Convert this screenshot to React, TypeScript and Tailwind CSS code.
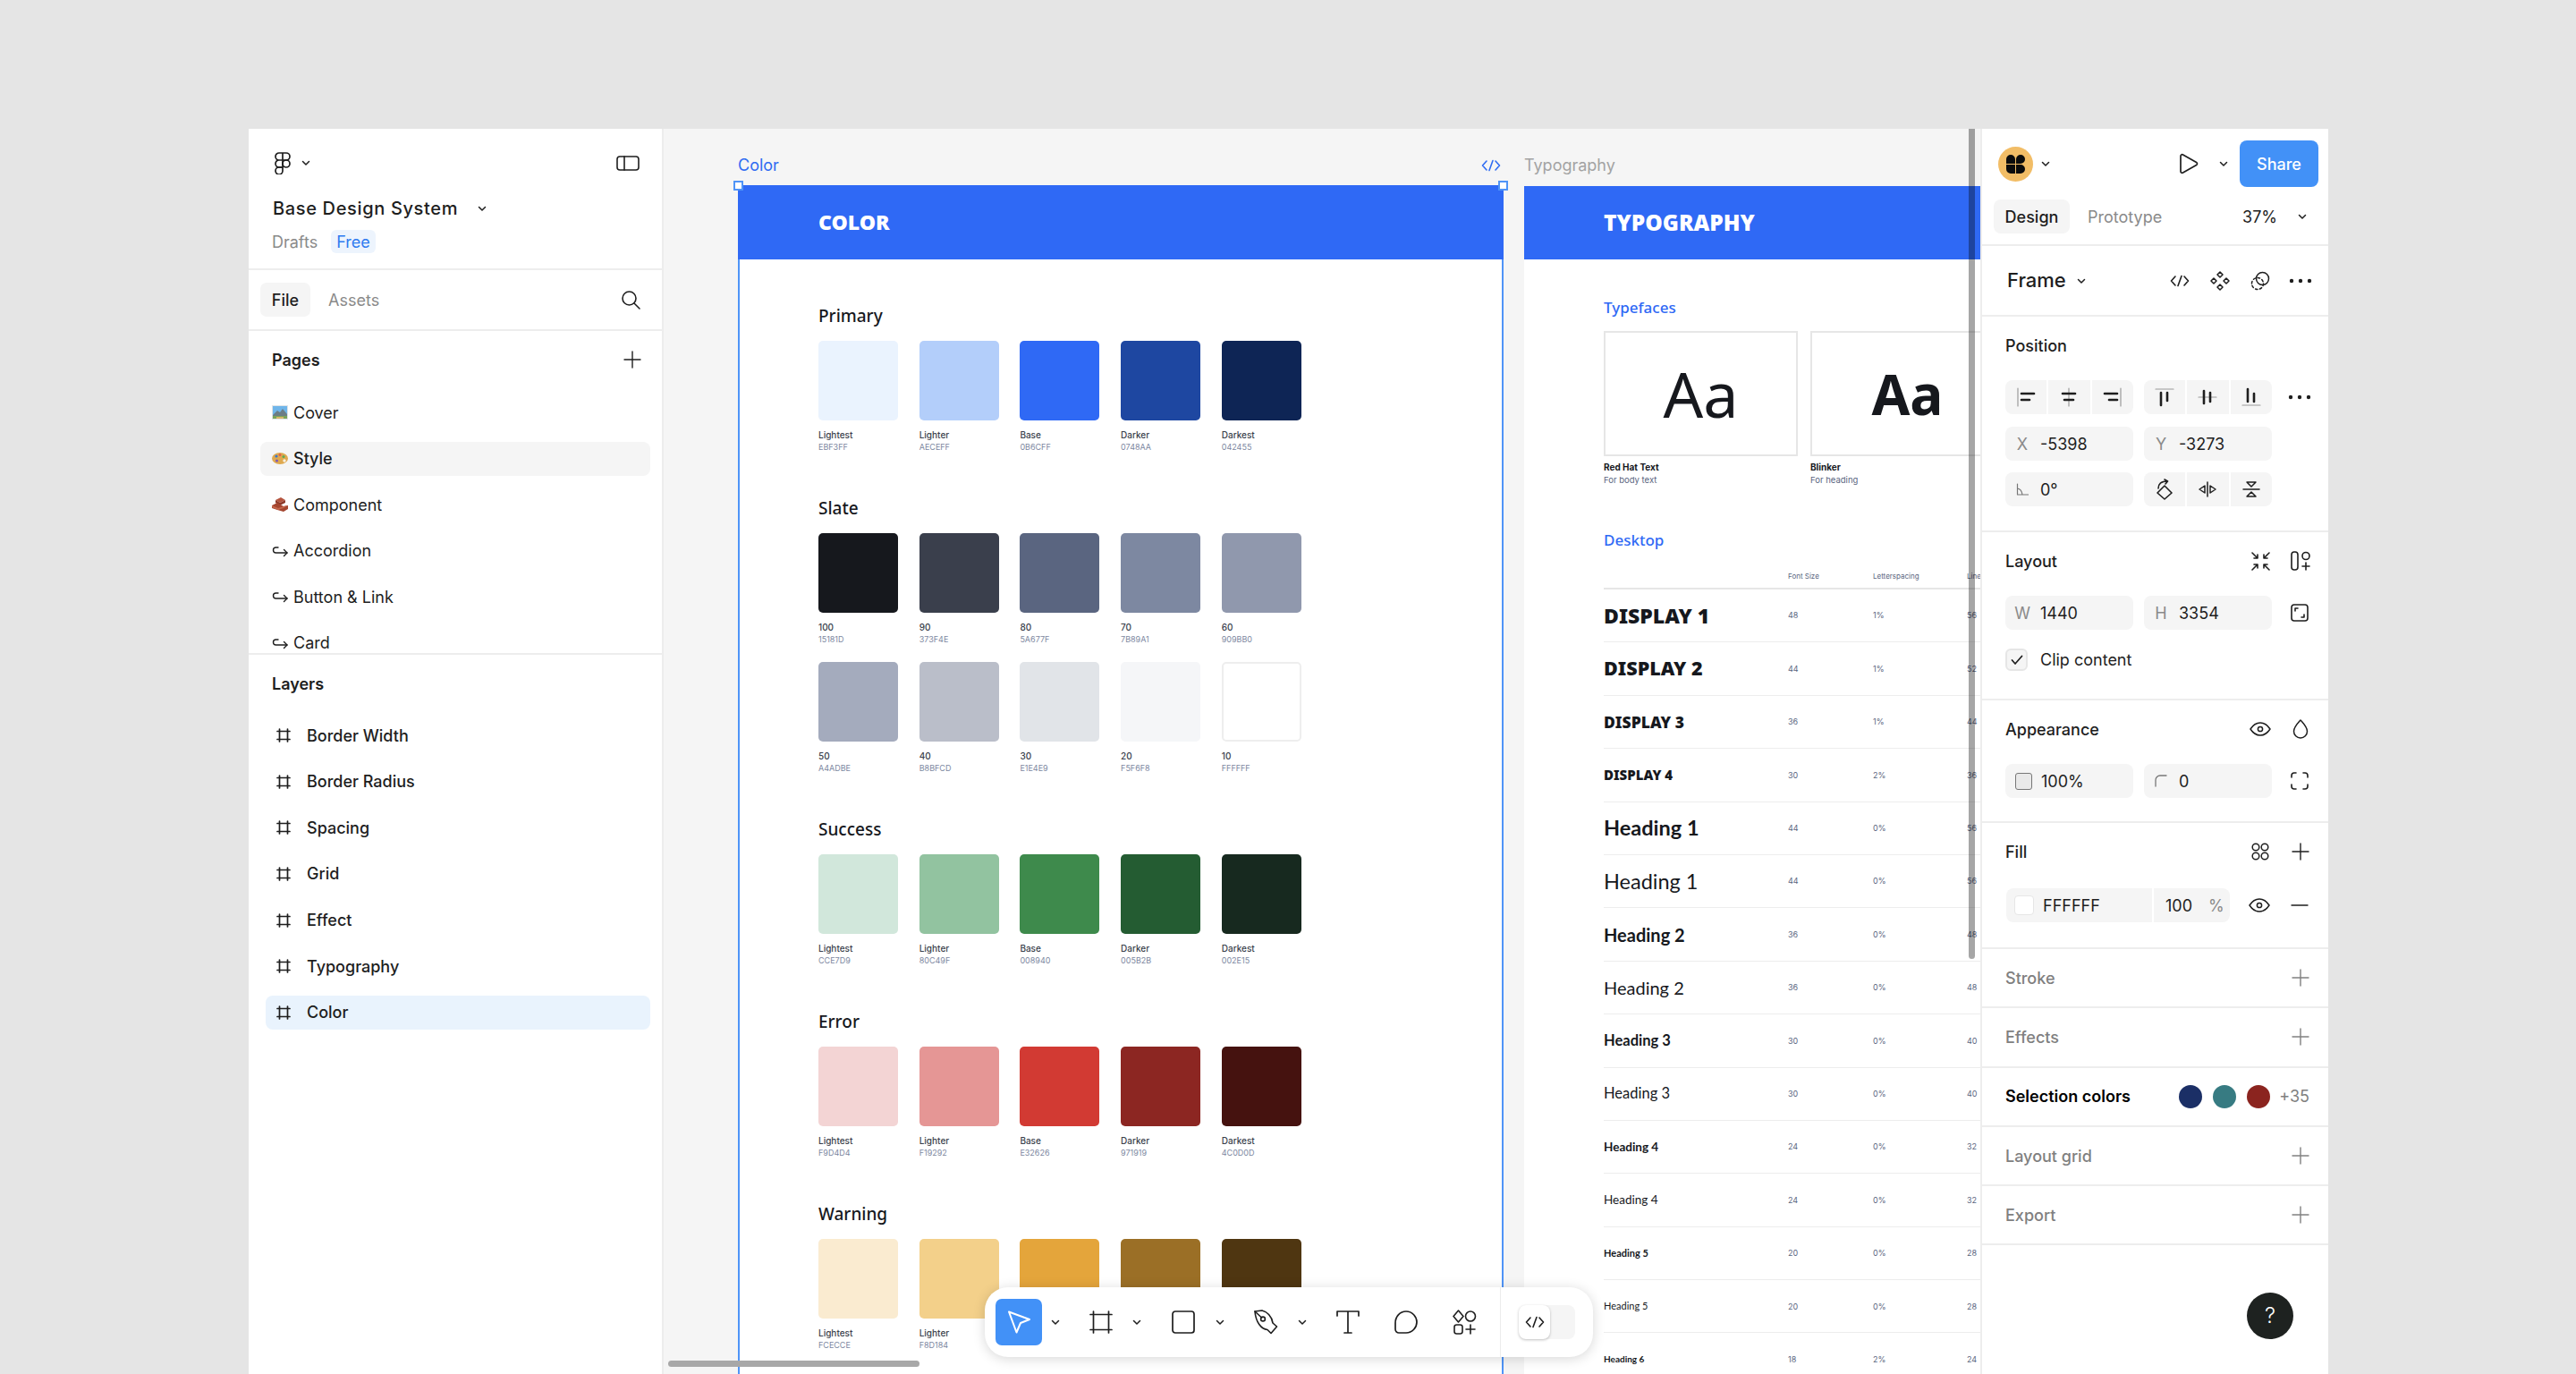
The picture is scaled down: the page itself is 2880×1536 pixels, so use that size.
import React from "react";

type P = { className?: string };
const S = ({ w = 24, h = 24, vb, className = "", children, sw = 1.6 }: { w?: number; h?: number; vb?: string; className?: string; children: React.ReactNode; sw?: number }) => (
  <svg width={w} height={h} viewBox={vb || `0 0 ${w} ${h}`} fill="none" stroke="currentColor" strokeWidth={sw} strokeLinecap="round" strokeLinejoin="round" className={`shrink-0 ${className}`}>
    {children}
  </svg>
);

const Chev = ({ className = "" }: P) => (
  <S w={12} h={12} sw={1.5} className={className}><path d="M2.5 4.5 6 8l3.5-3.5" /></S>
);
const Plus = ({ className = "" }: P) => (
  <S w={20} h={20} sw={1.4} className={className}><path d="M10 1v18M1 10h18" /></S>
);
const Dots = () => (
  <svg width="26" height="6" viewBox="0 0 26 6" className="shrink-0"><circle cx="3" cy="3" r="2.2" fill="#1e1e1e" /><circle cx="13" cy="3" r="2.2" fill="#1e1e1e" /><circle cx="23" cy="3" r="2.2" fill="#1e1e1e" /></svg>
);
const Eye = () => (
  <S w={24} h={16} sw={1.5}><path d="M1 8c3-4.6 6.8-7 11-7s8 2.4 11 7c-3 4.6-6.8 7-11 7S4 12.6 1 8z" /><circle cx="12" cy="8" r="2.6" /></S>
);
const CodeIc = ({ className = "" }: P) => (
  <S w={22} h={14} sw={1.6} className={className}><path d="M6 2 1.5 7 6 12M16 2l4.5 5L16 12M13 1.5 9 12.5" /></S>
);
const Hash = () => (
  <S w={16} h={16} sw={1.7}><path d="M3.500 1v14M12.500 1v14M1 3.500h14M1 12.500h14" /></S>
);
const Hook = () => (
  <S w={18} h={14} sw={1.4}><path d="M17 9H4.500a3 3 0 0 1 0-6H7" /><path d="M13.500 5.500 17 9l-3.500 3.500" /></S>
);

const Cover = () => (
  <svg width="18" height="16" viewBox="0 0 18 16" className="shrink-0">
    <rect width="18" height="16" fill="#dfe3e6" />
    <rect x="1" y="1" width="16" height="14" fill="#6fb5ea" />
    <path d="M1 11 6 6l3 2 3-4 5 6v5H1z" fill="#6b7d86" />
    <path d="M1 12h16v3H1z" fill="#7aa35a" />
    <path d="M5 13h8v2H5z" fill="#d8b56a" />
  </svg>
);
const Palette = () => (
  <svg width="18" height="15" viewBox="0 0 18 15" className="shrink-0">
    <ellipse cx="9" cy="7.500" rx="9" ry="6.500" fill="#dfa94f" />
    <circle cx="5" cy="5" r="1.600" fill="#3b78c9" />
    <circle cx="9" cy="3.600" r="1.400" fill="#e2574c" />
    <circle cx="13" cy="5.400" r="1.500" fill="#5aa85a" />
    <circle cx="5.500" cy="10" r="1.500" fill="#7c5bb8" />
    <circle cx="14" cy="10" r="1.700" fill="#f6f1e4" />
  </svg>
);
const Bricks = () => (
  <svg width="18" height="16" viewBox="0 0 18 16" className="shrink-0">
    <path d="M4 3 10 0l5 3-6 3z" fill="#b5553f" />
    <path d="M4 3v3l5 3V6zM9 6v3l6-3V3z" fill="#8d3a2a" />
    <path d="M0 9l6-3 7 4 5-1v4l-5 3-7-2-6-2z" fill="#a4452f" />
    <path d="M0 9l7 3 6-2 5-1-5 3-6 2-7-3z" fill="#c4664b" />
  </svg>
);

const Logo = () => (
  <S w={20} h={25} vb="0 0 20 25" sw={1.7}>
    <path d="M10 1H6a4 4 0 0 0 0 8h4V1zM10 1h4a4 4 0 0 1 0 8h-4V1zM10 9H6a4 4 0 0 0 0 8h4V9z" />
    <circle cx="14" cy="13" r="4" />
    <path d="M6 17h4v4a4 4 0 1 1-4-4z" />
  </S>
);

const Divider = () => <div className="h-[2px] bg-[#ededed] shrink-0" />;

const pages = [
  { n: "Cover", ic: <Cover />, x: "" },
  { n: "Style", ic: <Palette />, x: "bg-[#f5f5f5] font-medium" },
  { n: "Component", ic: <Bricks />, x: "" },
  { n: "Accordion", ic: <Hook />, x: "" },
  { n: "Button & Link", ic: <Hook />, x: "" },
  { n: "Card", ic: <Hook />, x: "" },
];
const layers = ["Border Width", "Border Radius", "Spacing", "Grid", "Effect", "Typography", "Color"];

const LeftPanel = () => (
  <aside className="w-[464px] shrink-0 bg-white border-r-2 border-[#ededed] flex flex-col text-[#1e1e1e] overflow-hidden">
    <div className="h-[156px] shrink-0 flex flex-col">
      <div className="h-[38px] mt-[19px] pl-[28px] pr-[25px] flex items-center">
        <Logo />
        <Chev className="ml-[10px]" />
        <S w={26} h={17} sw={1.6} className="ml-auto"><rect x="1" y="1" width="24" height="15" rx="3" /><path d="M9 1v15" /></S>
      </div>
      <div className="h-[28px] mt-[18px] pl-[27px] flex items-center text-[20px] font-medium tracking-[0.65px]">
        Base Design System
        <Chev className="ml-[21px]" />
      </div>
      <div className="h-[26px] mt-[10px] pl-[26px] flex items-center text-[18px] text-[#8a8a8a]">
        Drafts
        <span className="ml-[15px] px-[6px] h-[26px] flex items-center rounded-[6px] bg-[#edf4fd] text-[#2f7bf0]">Free</span>
      </div>
    </div>
    <Divider />
    <div className="h-[66px] shrink-0 pl-[13px] pr-[24px] flex items-center text-[18px] font-medium">
      <span className="w-[56px] h-[38px] rounded-[7px] bg-[#f5f5f5] flex items-center justify-center">File</span>
      <span className="ml-[20px] text-[#8a8a8a] font-normal">Assets</span>
      <S w={22} h={22} sw={1.6} className="ml-auto"><circle cx="9.500" cy="9.500" r="7.500" /><path d="m15 15 6 6" /></S>
    </div>
    <Divider />
    <div className="h-[360px] shrink-0 overflow-hidden flex flex-col">
      <div className="h-[24px] mt-[20px] pl-[26px] pr-[23px] flex items-center justify-between text-[18px] font-semibold">
        Pages
        <Plus />
      </div>
      <div className="mt-[28px] pl-[13px] flex flex-col gap-[13.6px]">
        {pages.map((p) => (
          <div key={p.n} className={`w-[436px] h-[38px] shrink-0 rounded-[8px] pl-[13px] flex items-center gap-[6px] text-[18px] ${p.x}`}>
            {p.ic}
            <span>{p.n}</span>
          </div>
        ))}
      </div>
    </div>
    <Divider />
    <div className="flex-1 flex flex-col">
      <div className="h-[24px] mt-[20px] pl-[26px] flex items-center text-[18px] font-semibold">Layers</div>
      <div className="mt-[27px] pl-[19px] flex flex-col gap-[13.3px]">
        {layers.map((l) => (
          <div key={l} className={`w-[430px] h-[38.3px] shrink-0 rounded-[8px] pl-[12px] flex items-center gap-[18px] text-[18px] font-medium ${l === "Color" ? "bg-[#e9f3fd]" : ""}`}>
            <Hash />
            <span>{l}</span>
          </div>
        ))}
      </div>
    </div>
  </aside>
);

type SW = { c: string; l: string; h: string };
const mk = (cols: string[], labels: string[], hex: string[]): SW[] => cols.map((c, i) => ({ c, l: labels[i], h: hex[i] }));
const std = ["Lightest", "Lighter", "Base", "Darker", "Darkest"];
const sections: { t: string; rows: SW[][] }[] = [
  { t: "Primary", rows: [mk(["#eaf3fe", "#b3cefa", "#2f69f5", "#1e47a1", "#0e2555"], std, ["EBF3FF", "AECEFF", "0B6CFF", "0748AA", "042455"])] },
  {
    t: "Slate",
    rows: [
      mk(["#16181d", "#3a3f4c", "#5a6580", "#7d88a1", "#9098ad"], ["100", "90", "80", "70", "60"], ["15181D", "373F4E", "5A677F", "7B89A1", "909BB0"]),
      mk(["#a4abbd", "#babec9", "#e1e4e8", "#f5f6f8", "#ffffff"], ["50", "40", "30", "20", "10"], ["A4ADBE", "B8BFCD", "E1E4E9", "F5F6F8", "FFFFFF"]),
    ],
  },
  { t: "Success", rows: [mk(["#d1e7db", "#92c3a0", "#3e8a4c", "#245c32", "#17291f"], std, ["CCE7D9", "80C49F", "008940", "005B2B", "002E15"])] },
  { t: "Error", rows: [mk(["#f3d4d4", "#e59695", "#d23a33", "#8c2622", "#45120f"], std, ["F9D4D4", "F19292", "E32626", "971919", "4C0D0D"])] },
  { t: "Warning", rows: [mk(["#faebd0", "#f3d08a", "#e4a53b", "#9b6f26", "#4f3611"], std, ["FCECCE", "F8D184", "EFA00B", "8F6007", "483003"])] },
];

const ColorFrame = () => (
  <div className="absolute left-[83px] top-[63px] w-[856px] h-[1400px] bg-white border-x-2 border-[#4f94f7]">
    <div className="h-[83px] -mx-[2px] bg-[#2f69f5] flex items-center pl-[90px] text-white font-['Noto_Sans',sans-serif] font-black text-[23px]">COLOR</div>
    <div className="pl-[88px] pt-[51px] flex flex-col gap-[50px]">
      {sections.map((s) => (
        <section key={s.t}>
          <h3 className="h-[24px] leading-[24px] text-[19px] font-medium font-['Noto_Sans',sans-serif] text-[#16181d] mb-[16px]">{s.t}</h3>
          <div className="flex flex-col gap-[19px]">
            {s.rows.map((r, i) => (
              <div key={i} className="flex gap-[23.7px]">
                {r.map((c) => (
                  <div key={c.h} className="w-[89px]">
                    <div className={`h-[89px] rounded-[5px] ${c.c === "#ffffff" ? "border-2 border-[#eeeeee]" : ""}`} style={{ backgroundColor: c.c }} />
                    <div className="mt-[10px] h-[13px] leading-[13px] text-[10px] font-medium text-[#3a3f4c]">{c.l}</div>
                    <div className="h-[13px] leading-[13px] text-[9px] text-[#7d88a1]">{c.h}</div>
                  </div>
                ))}
              </div>
            ))}
          </div>
        </section>
      ))}
    </div>
  </div>
);

const typo: { n: string; f: string; s: string; l: string; h: string }[] = [
  { n: "DISPLAY 1", f: "font-['Noto_Sans',sans-serif] font-black text-[23px]", s: "48", l: "1%", h: "56" },
  { n: "DISPLAY 2", f: "font-['Noto_Sans',sans-serif] font-black text-[21.5px]", s: "44", l: "1%", h: "52" },
  { n: "DISPLAY 3", f: "font-['Noto_Sans',sans-serif] font-black text-[17.5px]", s: "36", l: "1%", h: "44" },
  { n: "DISPLAY 4", f: "font-['Noto_Sans',sans-serif] font-black text-[15px]", s: "30", l: "2%", h: "36" },
  { n: "Heading 1", f: "font-[Lato,sans-serif] font-bold text-[23.5px]", s: "44", l: "0%", h: "56" },
  { n: "Heading 1", f: "font-[Lato,sans-serif] font-normal text-[23.5px]", s: "44", l: "0%", h: "56" },
  { n: "Heading 2", f: "font-[Lato,sans-serif] font-bold text-[20px]", s: "36", l: "0%", h: "48" },
  { n: "Heading 2", f: "font-[Lato,sans-serif] font-normal text-[20px]", s: "36", l: "0%", h: "48" },
  { n: "Heading 3", f: "font-[Lato,sans-serif] font-bold text-[16.5px]", s: "30", l: "0%", h: "40" },
  { n: "Heading 3", f: "font-[Lato,sans-serif] font-normal text-[16.5px]", s: "30", l: "0%", h: "40" },
  { n: "Heading 4", f: "font-[Lato,sans-serif] font-bold text-[13.5px]", s: "24", l: "0%", h: "32" },
  { n: "Heading 4", f: "font-[Lato,sans-serif] font-normal text-[13.5px]", s: "24", l: "0%", h: "32" },
  { n: "Heading 5", f: "font-[Lato,sans-serif] font-bold text-[11px]", s: "20", l: "0%", h: "28" },
  { n: "Heading 5", f: "font-[Lato,sans-serif] font-normal text-[11px]", s: "20", l: "0%", h: "28" },
  { n: "Heading 6", f: "font-[Lato,sans-serif] font-bold text-[10px]", s: "18", l: "2%", h: "24" },
];

const TypographyFrame = () => (
  <div className="absolute left-[962px] top-[64px] w-[760px] h-[1400px] bg-white">
    <div className="h-[82px] bg-[#2f69f5] flex items-center pl-[89px] text-white font-['Noto_Sans',sans-serif] font-black text-[24.5px]">TYPOGRAPHY</div>
    <div className="pl-[89px]">
      <div className="mt-[42px] h-[24px] leading-[24px] text-[17px] font-medium font-['Noto_Sans',sans-serif] text-[#2f69f5]">Typefaces</div>
      <div className="mt-[14px] flex gap-[14px]">
        {[
          { a: "font-normal text-[70px]", n: "Red Hat Text", d: "For body text" },
          { a: "font-bold text-[62px]", n: "Blinker", d: "For heading" },
        ].map((t) => (
          <div key={t.n} className="w-[217px]">
            <div className={`h-[140px] border-2 border-[#e6e6e6] flex items-center justify-center text-[#16181d] font-['Noto_Sans',sans-serif] ${t.a}`}>Aa</div>
            <div className="mt-[5px] h-[14px] leading-[14px] text-[10px] font-bold text-[#16181d]">{t.n}</div>
            <div className="mt-[1px] h-[14px] leading-[14px] text-[9.5px] text-[#5a6580]">{t.d}</div>
          </div>
        ))}
      </div>
      <div className="mt-[48px] h-[24px] leading-[24px] text-[17px] font-medium font-['Noto_Sans',sans-serif] text-[#2f69f5]">Desktop</div>
      <div className="mt-[22px] w-[580px] h-[21px] border-b-2 border-[#e6e6e6] flex text-[8px] text-[#5a6580]">
        <span className="w-[206px]" />
        <span className="w-[95px]">Font Size</span>
        <span className="w-[105px]">Letterspacing</span>
        <span>Line Height</span>
      </div>
      {typo.map((r, i) => (
        <div key={i} className="w-[580px] h-[59.4px] border-b border-[#ededed] flex items-center text-[9px] text-[#5a6580]">
          <span className={`w-[206px] text-[#16181d] ${r.f}`}>{r.n}</span>
          <span className="w-[95px]">{r.s}</span>
          <span className="w-[105px]">{r.l}</span>
          <span>{r.h}</span>
        </div>
      ))}
    </div>
  </div>
);

const Handle = ({ className }: P) => <div className={`absolute w-[11px] h-[11px] bg-white border-2 border-[#4f94f7] ${className}`} />;

const Toolbar = () => (
  <div className="absolute left-[359px] top-[1295px] w-[680px] h-[78px] rounded-[26px] bg-white shadow-[0_2px_14px_rgba(0,0,0,0.16)] flex items-center pl-[12px] text-[#1e1e1e]">
    <div className="w-[52px] h-[52px] rounded-[7px] bg-[#4291f7] flex items-center justify-center text-white">
      <S w={28} h={28} sw={2}><path d="M3 2.500 26 11l-10 4-4.500 10.500z" /></S>
    </div>
    <Chev className="ml-[9px]" />
    <S w={26} h={26} sw={1.7} className="ml-[32px]"><path d="M4.500 1v24M21.500 1v24M1 4.500h24M1 21.500h24" /></S>
    <Chev className="ml-[21px]" />
    <S w={26} h={26} sw={1.7} className="ml-[33px]"><rect x="1" y="1" width="24" height="24" rx="3" /></S>
    <Chev className="ml-[22px]" />
    <S w={27} h={28} sw={1.6} className="ml-[32px]"><path d="M1 2 9 1c7 2 11 8 12 14l4.500 4-6.500 7.500-4-4C8 22 2 14 1 2z" /><circle cx="10" cy="10.500" r="2.400" /><path d="M1 2l7.500 7" /></S>
    <Chev className="ml-[21px]" />
    <S w={26} h={26} sw={1.7} className="ml-[32px]"><path d="M1 6V1h24v5M13 1v24M9 25h8" /></S>
    <S w={26} h={26} sw={1.7} className="ml-[39px]"><path d="M1 14C1 7 6 1 13 1s12 6 12 12-5 12-12 12H5a4 4 0 0 1-4-4z" /></S>
    <S w={28} h={28} sw={1.6} className="ml-[38px]"><path d="M7.500 1 13 7.500 7.500 14 2 7.500z" /><circle cx="21" cy="7.500" r="5.500" /><rect x="3" y="17" width="9" height="10" rx="2.500" /><path d="M21 17v10M16 22h10" /></S>
    <div className="w-px h-full bg-[#ececec] ml-[26px]" />
    <div className="ml-[20px] w-[63px] h-[38px] rounded-[8px] bg-[#f5f5f5]">
      <div className="w-[35px] h-[38px] rounded-[8px] bg-white shadow-[0_1px_3px_rgba(0,0,0,0.25)] flex items-center justify-center">
        <CodeIc />
      </div>
    </div>
  </div>
);

const Canvas = () => (
  <main className="flex-1 relative overflow-hidden bg-[#f5f5f5]">
    <div className="absolute left-[83px] top-[29px] h-[24px] leading-[24px] text-[18px] text-[#2f6cf2]">Color</div>
    <CodeIc className="absolute left-[914px] top-[34px] text-[#2f6cf2]" />
    <div className="absolute left-[962px] top-[29px] h-[24px] leading-[24px] text-[18px] text-[#a3a3a3]">Typography</div>
    <ColorFrame />
    <TypographyFrame />
    <Handle className="left-[78px] top-[58px]" />
    <Handle className="left-[933px] top-[58px]" />
    <div className="absolute left-[1459px] top-0 w-[7px] h-[928px] rounded-b-[4px] bg-black/35" />
    <div className="absolute left-[5px] top-[1377px] w-[281px] h-[7px] rounded-full bg-[#a8a8a8]" />
    <Toolbar />
  </main>
);

const Seg = ({ children }: { children: React.ReactNode }) => (
  <div className="flex gap-[2px] w-[143px] h-[38px]">
    {React.Children.map(children, (c, i) => (
      <div className={`flex-1 bg-[#f5f5f5] flex items-center justify-center ${i === 0 ? "rounded-l-[8px]" : ""} ${i === 2 ? "rounded-r-[8px]" : ""}`}>{c}</div>
    ))}
  </div>
);
const Field = ({ l, v }: { l: React.ReactNode; v: string }) => (
  <div className="w-[143px] h-[38px] rounded-[8px] bg-[#f5f5f5] flex items-center text-[18px]">
    <span className="w-[38px] flex items-center justify-center text-[#8a8a8a]">{l}</span>
    <span className="ml-[1px]">{v}</span>
  </div>
);
const IconBox = ({ children }: { children: React.ReactNode }) => <div className="w-[38px] h-[38px] flex items-center justify-center shrink-0">{children}</div>;

const Bar = ({ d }: { d: string }) => <path d={d} stroke="#1e1e1e" strokeWidth={2.6} />;
const Guide = ({ d }: { d: string }) => <path d={d} stroke="#9a9a9a" strokeWidth={1.2} />;
const Al = ({ g, b }: { g: string; b: string[] }) => (
  <S w={24} h={24} sw={2}>
    <Guide d={g} />
    {b.map((x) => <Bar key={x} d={x} />)}
  </S>
);

const Title = ({ t, children }: { t: string; children?: React.ReactNode }) => (
  <div className="h-[24px] mt-[20px] pl-[26px] pr-[12px] flex items-center justify-between text-[18px] font-medium">
    <span>{t}</span>
    {children && <div className="flex gap-[7px]">{children}</div>}
  </div>
);
const Row = ({ children, cls = "mt-[27px]" }: { children: React.ReactNode; cls?: string }) => (
  <div className={`pl-[26px] flex gap-[12px] items-center ${cls}`}>{children}</div>
);
const Dim = ({ t }: { t: string }) => (
  <>
    <div className="h-[64.3px] shrink-0 pl-[26px] pr-[21px] flex items-center justify-between text-[18px] font-medium text-[#808080]">
      {t}
      <Plus />
    </div>
    <Divider />
  </>
);

const RightPanel = () => (
  <aside className="w-[389px] shrink-0 bg-white border-l-2 border-[#ededed] flex flex-col text-[#1e1e1e] relative">
    <div className="h-[129px] shrink-0 flex flex-col">
      <div className="h-[52px] mt-[13px] pl-[18px] pr-[11px] flex items-center">
        <svg width="39" height="39" viewBox="0 0 39 39" className="shrink-0">
          <circle cx="19.500" cy="19.500" r="19.500" fill="#f2bd66" />
          <path d="M9 19V14a5 5 0 0 1 5-5 5 5 0 0 1 5 5v5zM20 19v-5a5 5 0 0 1 5-5 5 5 0 0 1 5 5 5 5 0 0 1-5 5zM9 20h10v10h-5a5 5 0 0 1-5-5zM20 20h5a5 5 0 0 1 5 5 5 5 0 0 1-5 5h-5z" fill="#0c0c0c" />
        </svg>
        <Chev className="ml-[8px]" />
        <S w={22} h={24} sw={1.7} className="ml-auto mr-[2px]"><path d="M2 3.500c0-1.500 1.400-2.200 2.600-1.600l15 8.600c1.200.7 1.200 2.400 0 3l-15 8.600C3.400 22.700 2 22 2 20.500z" /></S>
        <Chev className="ml-[20px]" />
        <div className="ml-[12px] w-[88px] h-[52px] rounded-[8px] bg-[#4291f7] text-white flex items-center justify-center text-[18px] font-medium">Share</div>
      </div>
      <div className="h-[38px] mt-[14px] pl-[13px] pr-[23px] flex items-center text-[18px]">
        <span className="w-[85px] h-[38px] rounded-[8px] bg-[#f5f5f5] flex items-center justify-center font-medium">Design</span>
        <span className="ml-[20px] text-[#8a8a8a]">Prototype</span>
        <span className="ml-auto">37%</span>
        <Chev className="ml-[22px]" />
      </div>
    </div>
    <Divider />
    <div className="h-[77px] shrink-0 pl-[28px] pr-[12px] flex items-center">
      <span className="text-[22px] font-medium">Frame</span>
      <Chev className="ml-[11px]" />
      <div className="ml-auto flex gap-[7px]">
        <IconBox><CodeIc /></IconBox>
        <IconBox><S w={22} h={22} sw={1.5}><path d="M11 1 14 4 11 7 8 4zM11 15l3 3-3 3-3-3zM4 8l3 3-3 3-3-3zM18 8l3 3-3 3-3-3z" /></S></IconBox>
        <IconBox><S w={22} h={22} sw={1.5}><circle cx="13.500" cy="8.500" r="7" /><circle cx="8" cy="14" r="6.500" strokeDasharray="2.500 2.500" /></S></IconBox>
        <IconBox><Dots /></IconBox>
      </div>
    </div>
    <Divider />

    <div className="h-[239px] shrink-0">
      <Title t="Position" />
      <Row>
        <Seg>
          <Al g="M3 2v20" b={["M7 8h14", "M7 15h9"]} />
          <Al g="M12 2v20" b={["M5 8h14", "M7 15h10"]} />
          <Al g="M21 2v20" b={["M3 8h14", "M8 15h9"]} />
        </Seg>
        <Seg>
          <Al g="M2 3h20" b={["M8 7v14", "M15 7v9"]} />
          <Al g="M2 12h20" b={["M8 5v14", "M15 7v10"]} />
          <Al g="M2 21h20" b={["M8 3v14", "M15 8v9"]} />
        </Seg>
        <IconBox><Dots /></IconBox>
      </Row>
      <Row cls="mt-[14px]">
        <Field l="X" v="-5398" />
        <Field l="Y" v="-3273" />
      </Row>
      <Row cls="mt-[13px]">
        <Field l={<S w={14} h={14} sw={1.2} className="text-[#777]"><path d="M1.500 1v12h12M1.500 6c3 .5 5 3 5.500 7" /></S>} v="0°" />
        <Seg>
          <S w={20} h={24} sw={1.6}><path d="M10 8l8 8-8 7-8-7z" /><path d="M3 11C3 6 6 3 13 3M10 1l3.500 2L11 6" /></S>
          <S w={22} h={18} sw={1.5}><path d="M11 1v16M8 5 2 9l6 4zM14 5l6 4-6 4z" /></S>
          <S w={20} h={22} sw={1.5}><path d="M1 11h18M5 3h10l-5 5zM10 14l5 5H5z" /></S>
        </Seg>
      </Row>
    </div>
    <Divider />

    <div className="h-[186px] shrink-0">
      <Title t="Layout">
        <IconBox><S w={21} h={21} sw={1.6}><path d="M1 1l6 6M3 7h4V3M20 1l-6 6M14 3v4h4M1 20l6-6M3 14h4v4M20 20l-6-6M14 18v-4h4" /></S></IconBox>
        <IconBox><S w={22} h={22} sw={1.6}><rect x="1" y="1" width="7" height="20" rx="3" /><circle cx="17" cy="5.500" r="4" /><path d="M17 13v8M13 17h8" /></S></IconBox>
      </Title>
      <Row>
        <Field l="W" v="1440" />
        <Field l="H" v="3354" />
        <IconBox><S w={20} h={20} sw={1.6}><rect x="1" y="1" width="18" height="18" rx="3" /><path d="M5 8V5h3M15 12v3h-3" /></S></IconBox>
      </Row>
      <div className="mt-[20px] pl-[26px] flex items-center gap-[14px] text-[18px]">
        <div className="w-[25px] h-[25px] rounded-[6px] border-2 border-[#e6e6e6] bg-[#f5f5f5] flex items-center justify-center">
          <S w={14} h={12} sw={1.7}><path d="M1.500 6 5 10l7.500-8.500" /></S>
        </div>
        Clip content
      </div>
    </div>
    <Divider />

    <div className="h-[135px] shrink-0">
      <Title t="Appearance">
        <IconBox><Eye /></IconBox>
        <IconBox><S w={18} h={22} sw={1.5}><path d="M9 1c4 4.500 7.500 8 7.500 12.500a7.500 7.500 0 0 1-15 0C1.500 9 5 5.500 9 1z" /></S></IconBox>
      </Title>
      <Row>
        <div className="w-[143px] h-[38px] rounded-[8px] bg-[#f5f5f5] flex items-center text-[18px]">
          <div className="ml-[11px] mr-[10px] w-[19px] h-[19px] rounded-[3px] border-[1.5px] border-[#777] bg-[#e9e9e9]" />
          100%
        </div>
        <Field l={<S w={14} h={14} sw={1.3} className="text-[#777]"><path d="M1 13V6a5 5 0 0 1 5-5h7" /></S>} v="0" />
        <IconBox><S w={20} h={20} sw={1.6}><path d="M1 6V4a3 3 0 0 1 3-3h2M14 1h2a3 3 0 0 1 3 3v2M19 14v2a3 3 0 0 1-3 3h-2M6 19H4a3 3 0 0 1-3-3v-2" /></S></IconBox>
      </Row>
    </div>
    <Divider />

    <div className="h-[139px] shrink-0">
      <Title t="Fill">
        <IconBox><S w={20} h={20} sw={1.5}><circle cx="5" cy="5" r="3.800" /><circle cx="15" cy="5" r="3.800" /><circle cx="5" cy="15" r="3.800" /><circle cx="15" cy="15" r="3.800" /></S></IconBox>
        <IconBox><Plus /></IconBox>
      </Title>
      <div className="mt-[29px] pl-[27px] pr-[12px] flex items-center">
        <div className="w-[250px] h-[38px] shrink-0 rounded-[8px] bg-[#f5f5f5] flex items-center text-[18px]">
          <div className="ml-[9px] w-[22px] h-[22px] rounded-[4px] bg-white border border-[#e6e6e6]" />
          <span className="ml-[10px] w-[122px]">FFFFFF</span>
          <div className="w-[2px] h-[38px] bg-white" />
          <span className="ml-[13px]">100</span>
          <span className="ml-[18px] text-[#8a8a8a]">%</span>
        </div>
        <div className="ml-[21px] flex"><Eye /></div>
        <S w={20} h={4} sw={1.4} className="ml-[23px]"><path d="M1 2h18" /></S>
      </div>
    </div>
    <Divider />

    <Dim t="Stroke" />
    <Dim t="Effects" />
    <div className="h-[64.3px] shrink-0 pl-[26px] pr-[21px] flex items-center text-[18px] font-semibold text-black">
      Selection colors
      <div className="ml-auto flex items-center gap-[12px]">
        <span className="w-[26px] h-[26px] rounded-full bg-[#1b2f66]" />
        <span className="w-[26px] h-[26px] rounded-full bg-[#377b82]" />
        <span className="w-[26px] h-[26px] rounded-full bg-[#8b241f]" />
      </div>
      <span className="ml-[10px] font-normal text-[#808080]">+35</span>
    </div>
    <Divider />
    <Dim t="Layout grid" />
    <Dim t="Export" />

    <div className="absolute left-[296px] top-[1301px] w-[52px] h-[52px] rounded-full bg-[#1e2220] text-white flex items-center justify-center text-[24px] font-light">?</div>
  </aside>
);

export default function App() {
  return (
    <div className="w-[2880px] h-[1536px] overflow-hidden bg-[#e5e5e5] pt-[144px] pl-[278px] pr-[277px] font-[Inter,sans-serif]">
      <div className="flex h-[1392px]">
        <LeftPanel />
        <Canvas />
        <RightPanel />
      </div>
    </div>
  );
}
